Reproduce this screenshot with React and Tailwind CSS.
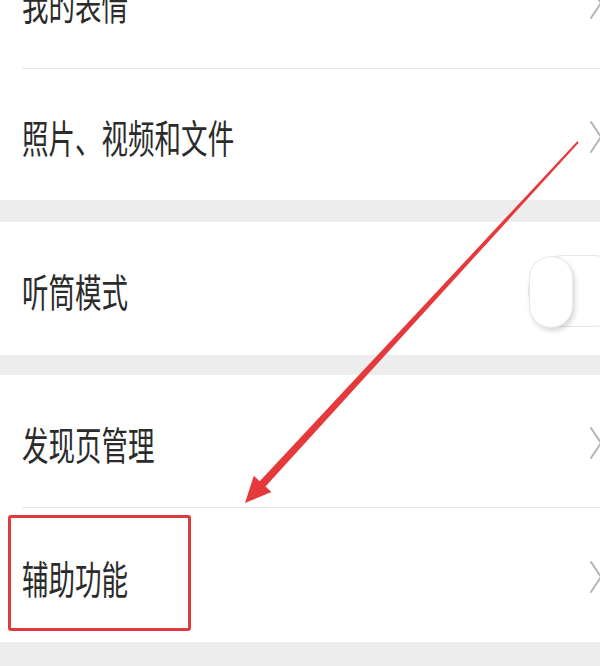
import React from 'react';

const textFont = { fontFamily: '"Noto Sans CJK SC", "Noto Sans", sans-serif' };

function Chevron() {
  return (
    <svg width="14" height="34" viewBox="0 0 14 34" className="shrink-0 mr-[-3px]">
      <polyline points="2,2 12,17 2,32" fill="none" stroke="#b4b4b4" strokeWidth="2" strokeLinecap="round" strokeLinejoin="round" />
    </svg>
  );
}

function Toggle() {
  return (
    <div className="shrink-0 mr-[-30px] w-[102px] h-[72px] rounded-full border border-[#e6e6e6] bg-white flex">
      <div className="w-[44px] h-[72px] rounded-full bg-white border border-[#e8e8e8] shadow-[2px_3px_5px_rgba(0,0,0,0.16)]" />
    </div>
  );
}

function Row({ label, height, right = 'chevron', className = '' }) {
  return (
    <div className={`bg-white flex items-center justify-between pl-[22px] pt-[4px] ${height} ${className}`}>
      <span
        className="inline-block origin-left scale-x-[0.68] text-[39px] leading-none text-[#2b2b2b] whitespace-nowrap"
        style={textFont}
      >
        {label}
      </span>
      {right === 'chevron' ? <Chevron /> : <Toggle />}
    </div>
  );
}

function Divider() {
  return (
    <div className="bg-white pl-[22px]">
      <div className="h-px bg-[#e6e6e6]" />
    </div>
  );
}

export default function App() {
  return (
    <div className="relative w-[600px] h-[666px] overflow-hidden bg-[#ededed]">
      <Row label="我的表情" height="h-[134px]" className="-mt-[66px]" />
      <Divider />
      <Row label="照片、视频和文件" height="h-[131px]" />
      <div className="h-[22px]" />
      <Row label="听筒模式" height="h-[133px]" right="toggle" />
      <div className="h-[20px]" />
      <Row label="发现页管理" height="h-[132px]" />
      <Divider />
      <Row label="辅助功能" height="h-[134px]" />

      {/* annotation overlay */}
      <div className="absolute left-[8px] top-[515px] w-[183px] h-[116px] border-[3px] border-[#e2393c] rounded-[3px] pointer-events-none" />
      <svg className="absolute inset-0 pointer-events-none" width="600" height="666" viewBox="0 0 600 666">
        <polygon
          points="577.3,141.3 259.7,481.2 253.8,475.8 245,503 271.4,492 265.5,486.6 578.7,142.7"
          fill="#e5393b"
        />
      </svg>
    </div>
  );
}
